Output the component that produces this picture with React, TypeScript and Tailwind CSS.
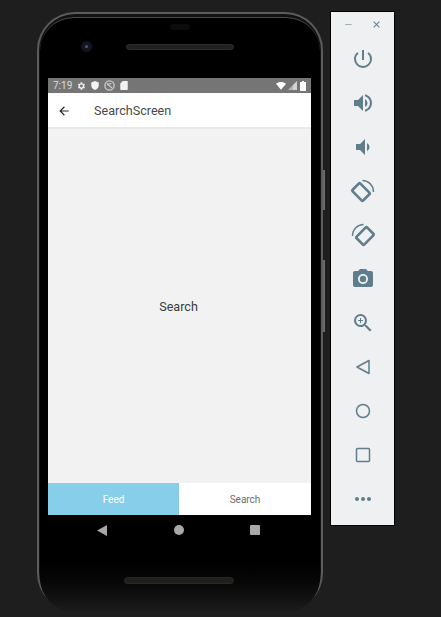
import React from 'react';
import { MdArrowBack, MdCameraAlt, MdClose, MdMoreHoriz, MdPowerSettingsNew, MdRemove, MdVolumeDown, MdVolumeUp, MdZoomIn } from 'react-icons/md';

const RotateIcon = ({ flip = false }: { flip?: boolean }) => (
  <svg width="24" height="24" viewBox="0 0 24 24" fill="none" className={flip ? '-scale-x-100' : ''}>
    <rect x="2.500" y="7.500" width="15" height="11" rx="1.200" transform="rotate(45 10 13)" stroke="#607d8b" strokeWidth="2.600" />
    <path d="M11.500 1.500C17.500 1.500 22.500 6.500 22.500 13" stroke="#607d8b" strokeWidth="1.500" />
  </svg>
);

const SideButton = ({ children }: { children: React.ReactNode }) => (
  <div className="h-11 flex items-center justify-center">{children}</div>
);

const StatusBar = () => (
  <div className="h-[15px] bg-[#757575] flex items-center pl-[5px] pr-[5px] text-[10px] text-[#dcdcdc]">
    <span className="w-[23px] leading-none">7:19</span>
    <div className="flex items-center gap-[4px]">
      <svg width="10" height="10" viewBox="0 0 24 24" fill="#eeeeee">
        <path d="M19.400 13a7.500 7.500 0 0 0 0-2l2.100-1.600-2-3.500-2.500 1a7.600 7.600 0 0 0-1.700-1L15 3.200h-4l-.4 2.700a7.600 7.600 0 0 0-1.700 1l-2.500-1-2 3.500L6.500 11a7.500 7.500 0 0 0 0 2l-2.100 1.600 2 3.500 2.500-1a7.600 7.600 0 0 0 1.700 1l.4 2.700h4l.4-2.700a7.600 7.600 0 0 0 1.700-1l2.500 1 2-3.500zM13 15.500a3.500 3.500 0 1 1 0-7 3.500 3.500 0 0 1 0 7z" />
      </svg>
      <svg width="10" height="11" viewBox="0 0 24 24" fill="#f4f4f4">
        <path d="M12 1 3 4.500v7c0 5.500 3.800 10 9 11.500 5.200-1.500 9-6 9-11.500v-7z" />
      </svg>
      <svg width="11" height="11" viewBox="0 0 24 24" fill="none" stroke="#c8c8c8">
        <circle cx="12" cy="12" r="10" strokeWidth="3" />
        <path d="M6 7l12 11M8 12a5 5 0 0 1 8-3" strokeWidth="2.500" />
      </svg>
      <svg width="10" height="11" viewBox="0 0 24 24" fill="#f2f2f2">
        <path d="M9 1h10a2 2 0 0 1 2 2v18a2 2 0 0 1-2 2H5a2 2 0 0 1-2-2V7z" />
      </svg>
    </div>
    <div className="flex items-center ml-auto gap-[2px]">
      <svg width="10" height="8" viewBox="0 0 20 16" fill="#ffffff">
        <path d="M10 15.500 0 3.500C3 1.300 6.300 0 10 0s7 1.300 10 3.500z" />
      </svg>
      <svg width="9" height="9" viewBox="0 0 18 18">
        <path d="M18 0v18H0z" fill="#b5b5b5" />
        <path d="M18 0v18H10V8z" fill="#f0f0f0" opacity="0.5" />
      </svg>
      <svg width="6" height="10" viewBox="0 0 12 20" fill="#ffffff" className="ml-[1px]">
        <path d="M4 0h4v2h3a1 1 0 0 1 1 1v16a1 1 0 0 1-1 1H1a1 1 0 0 1-1-1V3a1 1 0 0 1 1-1h3z" />
      </svg>
    </div>
  </div>
);

const Screen = () => (
  <div className="h-[437px] flex flex-col bg-[#f2f2f2] font-['Roboto',sans-serif]">
    <StatusBar />
    <div className="h-[36px] bg-white border-b-2 border-[#e9e9e9] flex items-center pl-[9px] pt-[2px]">
      <MdArrowBack size={14} className="text-[#2a2a2a]" />
      <span className="ml-[23px] text-[12.6px] text-[#4a4a4a]">SearchScreen</span>
    </div>
    <div className="flex-1 flex items-center justify-center pt-[2px] pr-[2px] text-[12.6px] text-[#3c3c3c]">Search</div>
    <div className="h-8 flex text-[10px]">
      <div className="w-[131px] bg-[#87ceeb] text-white flex items-center justify-center">Feed</div>
      <div className="flex-1 bg-white text-[#6b6b6b] flex items-center justify-center">Search</div>
    </div>
  </div>
);

export default function App() {
  return (
    <div className="w-[441px] h-[617px] overflow-hidden bg-[#1e1e1e] flex items-start pt-3 pl-[37px]">
      <div className="relative w-[286px] h-[599px] rounded-[38px] border-2 border-[#5c5c5c] border-b-[#3a3a3a] bg-[#111111]">
        {/* volume and power keys on the frame edge */}
        <div className="absolute -right-[4px] top-[156px] w-[2px] h-[40px] bg-[#6a6a6a]" />
        <div className="absolute -right-[4px] top-[246px] w-[2px] h-[72px] bg-[#6a6a6a]" />

        <div className="h-full ml-[1px] mr-[1px] mt-[3px] rounded-[34px] border-t border-[#4a4a4a] bg-gradient-to-b from-black from-[88%] to-[#1c1c1c] flex flex-col pl-[8px] pr-[9px]">
          <div className="h-[60px] flex flex-col items-center">
            <div className="mt-[6px] w-5 h-[6px] rounded-full bg-[#0c0c0c]" />
            <div className="mt-[11px] w-full flex items-center pl-[33px]">
              <div className="w-[11px] h-[11px] rounded-full bg-[#14141c] flex items-center justify-center">
                <div className="w-[3px] h-[3px] rounded-full bg-[#3c58a0]" />
              </div>
              <div className="ml-[34px] w-[108px] h-[6px] rounded-full bg-[#202020] border border-[#2c2c2c]" />
            </div>
          </div>
          <Screen />
          <div className="h-[30px] flex items-center justify-between pl-[49px] pr-[51px]">
            <svg width="10" height="11" viewBox="0 0 10 11" fill="#a8a8a8"><path d="M10 0v11L0 5.500z" /></svg>
            <div className="w-[10px] h-[10px] rounded-full bg-[#a8a8a8]" />
            <div className="w-[10px] h-[10px] rounded-[1px] bg-[#a8a8a8]" />
          </div>
          <div className="mt-[32px] ml-[76px] w-[110px] h-[7px] rounded-full bg-[#201f1c] border border-[#2a2926]" />
        </div>
      </div>

      <div className="ml-[7px] -mt-px w-[65px] h-[515px] bg-[#eff0f1] border border-black flex flex-col">
        <div className="h-[25px] flex items-center justify-between pl-[12px] pr-[12px] shrink-0">
          <MdRemove size={11} className="text-[#9aabb3]" />
          <MdClose size={11} className="text-[#607d8b]" />
        </div>
        <SideButton><MdPowerSettingsNew size={24} className="text-[#607d8b]" /></SideButton>
        <SideButton><MdVolumeUp size={24} className="text-[#607d8b]" /></SideButton>
        <SideButton><MdVolumeDown size={24} className="text-[#607d8b]" /></SideButton>
        <SideButton><RotateIcon /></SideButton>
        <SideButton><RotateIcon flip /></SideButton>
        <SideButton><MdCameraAlt size={24} className="text-[#607d8b]" /></SideButton>
        <SideButton><MdZoomIn size={24} className="text-[#607d8b]" /></SideButton>
        <SideButton>
          <svg width="24" height="24" viewBox="0 0 24 24" fill="none"><path d="M18 5.500v13L6 12z" stroke="#607d8b" strokeWidth="1.500" strokeLinejoin="round" /></svg>
        </SideButton>
        <SideButton>
          <svg width="24" height="24" viewBox="0 0 24 24" fill="none"><circle cx="12" cy="12" r="6.500" stroke="#607d8b" strokeWidth="1.500" /></svg>
        </SideButton>
        <SideButton>
          <svg width="24" height="24" viewBox="0 0 24 24" fill="none"><rect x="5.500" y="5.500" width="13" height="13" rx="1" stroke="#607d8b" strokeWidth="1.500" /></svg>
        </SideButton>
        <SideButton><MdMoreHoriz size={24} className="text-[#607d8b]" /></SideButton>
      </div>
    </div>
  );
}
